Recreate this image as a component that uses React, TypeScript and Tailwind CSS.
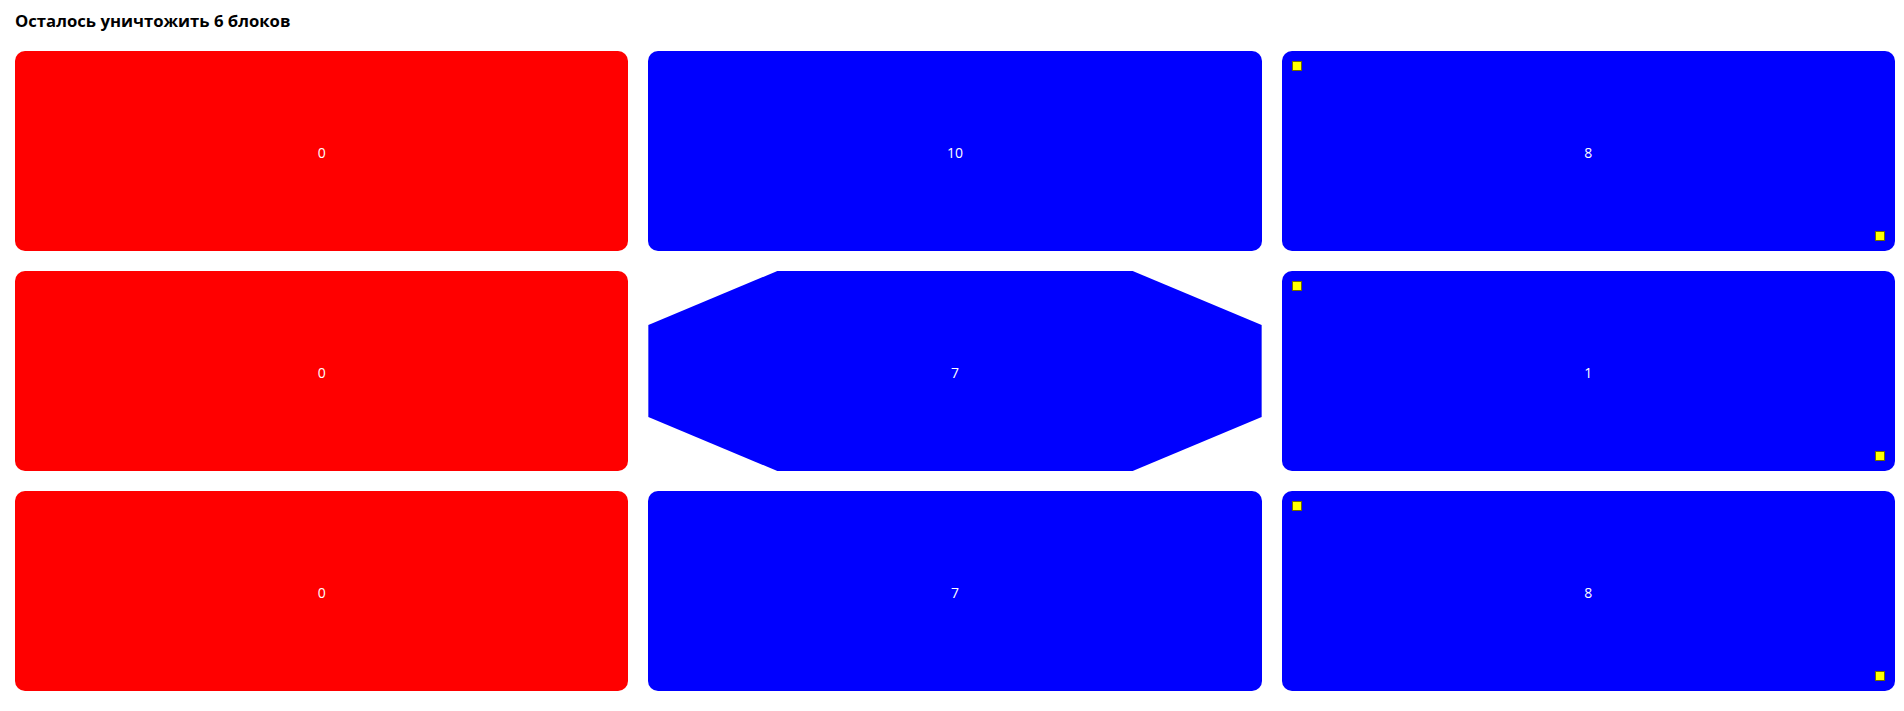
const blocks = [
  { value: 0, color: "red" },
  { value: 10, color: "blue" },
  { value: 8, color: "blue", marked: true },
  { value: 0, color: "red" },
  { value: 7, color: "blue", octagon: true },
  { value: 1, color: "blue", marked: true },
  { value: 0, color: "red" },
  { value: 7, color: "blue" },
  { value: 8, color: "blue", marked: true },
];

function Block({ value, color, marked, octagon }: { value: number; color: string; marked?: boolean; octagon?: boolean }) {
  return (
    <div
      className={
        "relative flex h-[200px] items-center justify-center pt-[3px] text-sm text-white " +
        (color === "red" ? "bg-[#ff0000] " : "bg-[#0000ff] ") +
        (octagon
          ? "[clip-path:polygon(129px_0,calc(100%-129px)_0,100%_54px,100%_calc(100%-54px),calc(100%-129px)_100%,129px_100%,0_calc(100%-54px),0_54px)]"
          : "rounded-[10px]")
      }
    >
      {marked && (
        <>
          <span className="absolute left-[10px] top-[10px] h-[10px] w-[10px] border border-[#6b6b00] bg-[#ffff00]" />
          <span className="absolute bottom-[10px] right-[10px] h-[10px] w-[10px] border border-[#6b6b00] bg-[#ffff00]" />
        </>
      )}
      {value}
    </div>
  );
}

export default function App() {
  return (
    <div className="bg-white pl-[15px] pr-[9px] pt-[10px]" style={{ fontFamily: "'Open Sans', 'Noto Sans', sans-serif" }}>
      <h1 className="h-[21px] text-[16.7px] font-bold leading-[21px] text-black">Осталось уничтожить 6 блоков</h1>
      <div className="mt-[20px] grid grid-cols-3 gap-[20px]">
        {blocks.map((b, i) => (
          <Block key={i} {...b} />
        ))}
      </div>
    </div>
  );
}
